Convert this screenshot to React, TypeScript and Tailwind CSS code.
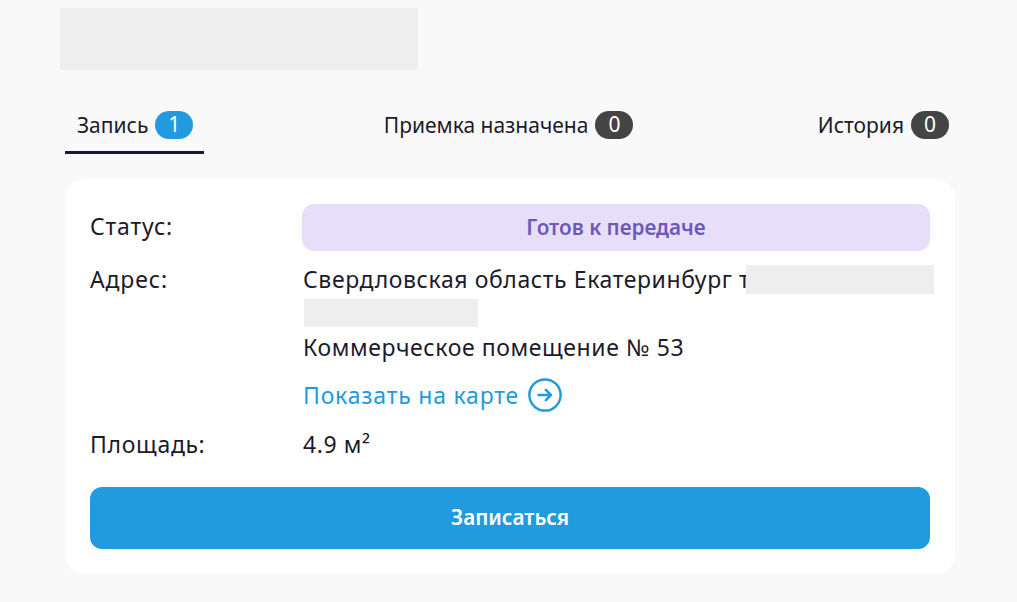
import React from "react";

const font = "font-['Noto_Sans','Open_Sans',sans-serif]";

function Tab({ label, count, active }: { label: string; count: number; active?: boolean }) {
  return (
    <div className={`flex h-[56px] items-center gap-[7px] pl-3 pr-[11px] border-b-[3px] ${active ? "border-[#1d1a2b]" : "border-transparent"}`}>
      <span className="text-[21px] leading-[28px] text-[#1d1a2b]">{label}</span>
      <span className={`flex h-[28px] w-[38px] items-center justify-center rounded-full text-[21px] leading-none text-white ${active ? "bg-[#229ade]" : "bg-[#444444]"}`}>
        {count}
      </span>
    </div>
  );
}

export default function App() {
  return (
    <div className={`${font} min-h-[602px] bg-[#f9f9f9] pl-[60px] pt-2 text-[#1d1a2b] overflow-hidden`}>
      <div className="h-[62px] w-[358px] bg-[#eeeeee]" />

      <div className="mt-[28px] ml-[5px] flex w-[895px] justify-between">
        <Tab label="Запись" count={1} active />
        <div className="ml-[6px]">
          <Tab label="Приемка назначена" count={0} />
        </div>
        <Tab label="История" count={0} />
      </div>

      <div className="mt-[25px] ml-[5px] w-[890px] rounded-[20px] bg-white p-[25px] text-[23px] tracking-[0.6px]">
        <div className="flex h-[47px] items-center">
          <div className="w-[212px] -mt-[2px] tracking-[0.85px]">Статус:</div>
          <div className="flex h-[47px] flex-1 items-center justify-center rounded-[12px] bg-[#e7dff9] text-[20.7px] font-semibold tracking-normal text-[#6e58bd]">
            Готов к передаче
          </div>
        </div>

        <div className="mt-[14px] flex">
          <div className="w-[212px] leading-[30px] -mt-[1px] tracking-[0.85px]">Адрес:</div>
          <div className="flex-1 pl-[1px]">
            <div className="relative h-[30px] leading-[30px] -mt-[1px] whitespace-nowrap">
              Свердловская область Екатеринбург т
              <span className="absolute -right-[4px] top-[1px] h-[29px] w-[188px] bg-[#eeeeee]" />
            </div>
            <div className="ml-[1px] mt-[5px] h-[28px] w-[174px] bg-[#eeeeee]" />
            <div className="mt-[5px] leading-[30px]">Коммерческое помещение № 53</div>
            <div className="mt-[16px] flex items-center gap-[9px] leading-[34px] tracking-[0.8px] text-[#229ade]">
              <span>Показать на карте</span>
              <svg width="34" height="34" viewBox="0 0 34 34" fill="none" stroke="#229ade" strokeWidth="2.5" strokeLinecap="round" strokeLinejoin="round">
                <circle cx="17" cy="17" r="15.6" />
                <path d="M10.5 17h12.5M17.8 11.8l5.2 5.2-5.2 5.2" />
              </svg>
            </div>
          </div>
        </div>

        <div className="mt-[17px] flex leading-[30px]">
          <div className="w-[212px] tracking-[0.7px]">Площадь:</div>
          <div className="pl-[1px]">4.9 м²</div>
        </div>

        <button className="mt-[28px] flex h-[62px] w-full items-center justify-center rounded-[12px] bg-[#229ade] text-[20.7px] font-semibold tracking-normal text-white">
          Записаться
        </button>
      </div>
    </div>
  );
}
